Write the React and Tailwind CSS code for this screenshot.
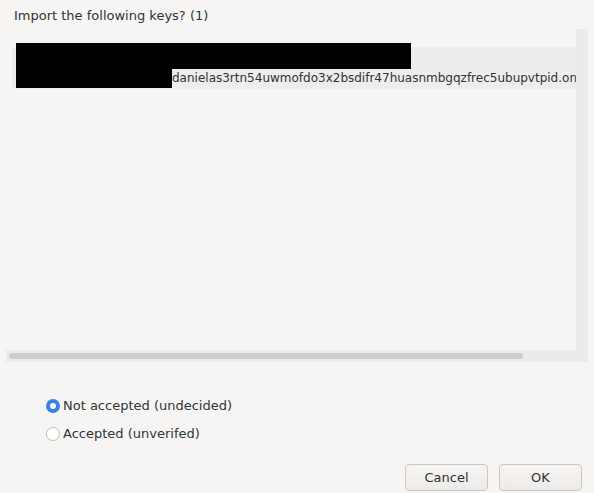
export default function App() {
  const font = { fontFamily: '"DejaVu Sans", "Noto Sans", sans-serif' };
  return (
    <div
      className="w-[594px] h-[493px] bg-[#f6f5f4] flex flex-col text-[#2e3436] overflow-hidden"
      style={font}
    >
      <div className="pl-[14px] pt-[7px] h-[29px] text-[13px] leading-[18px]">
        Import the following keys? (1)
      </div>
      <div className="mx-[6px] h-[333px] flex flex-col">
        <div className="flex flex-1 min-h-0">
          <div className="flex-1 min-w-0 overflow-hidden pt-[18px] pl-[6px]">
            <div className="h-[42px] bg-[#ededeb] flex flex-col pl-[4px]">
              <div className="-mt-[4px] h-[26px] w-[395px] bg-black shrink-0" />
              <div className="flex items-center h-[19px]">
                <div className="h-[19px] w-[156px] bg-black shrink-0" />
                <span className="text-[12px] leading-[19px] whitespace-nowrap">
                  danielas3rtn54uwmofdo3x2bsdifr47huasnmbgqzfrec5ubupvtpid.onion
                </span>
              </div>
            </div>
          </div>
          <div className="w-[12px] bg-[#ecebe9] shrink-0" />
        </div>
        <div className="h-[12px] bg-[#ecebe9] shrink-0 flex items-center px-[3px]">
          <div className="h-[6px] w-[514px] rounded-full bg-[#cdcdcd]" />
        </div>
      </div>
      <div className="pl-[46px] pt-[37px] flex flex-col gap-[14px] text-[13px]">
        <div className="flex items-center h-[14px]">
          <div className="w-[14px] h-[14px] rounded-full bg-[#3584e4] flex items-center justify-center">
            <div className="w-[6px] h-[6px] rounded-full bg-white" />
          </div>
          <span className="ml-[3px] leading-[16px]">Not accepted (undecided)</span>
        </div>
        <div className="flex items-center h-[14px]">
          <div className="w-[14px] h-[14px] rounded-full bg-white border border-[#c0bdb9]" />
          <span className="ml-[3px] leading-[16px]">Accepted (unverifed)</span>
        </div>
      </div>
      <div className="flex justify-end gap-[11px] pr-[12px] mt-auto mb-[2px] text-[13px]">
        <button className="w-[83px] h-[27px] rounded-[4px] border border-[#cdc7c2] bg-gradient-to-b from-[#f6f5f4] to-[#edebe9] text-[#2e3436]" style={font}>
          Cancel
        </button>
        <button className="w-[83px] h-[27px] rounded-[4px] border border-[#cdc7c2] bg-gradient-to-b from-[#f6f5f4] to-[#edebe9] text-[#2e3436]" style={font}>
          OK
        </button>
      </div>
    </div>
  );
}
